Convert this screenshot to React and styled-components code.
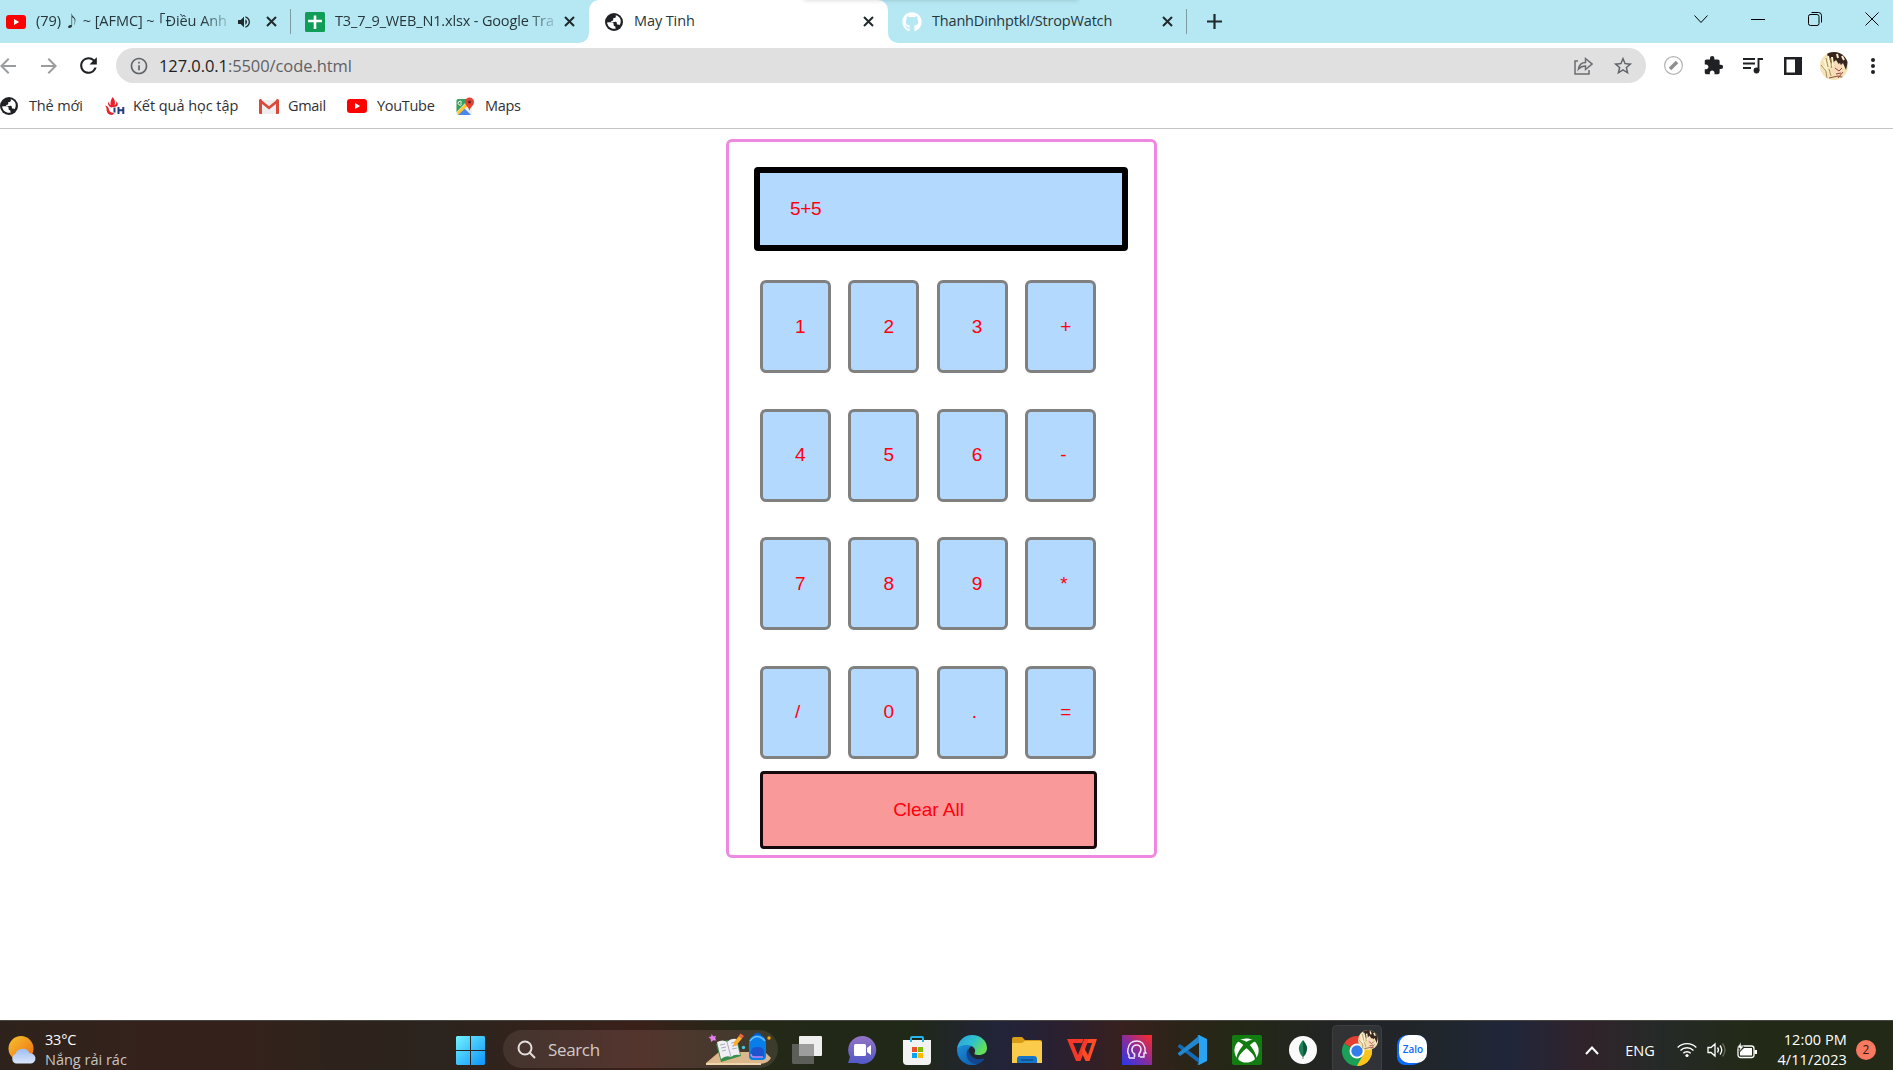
import React from "react";
import styled, { createGlobalStyle } from "styled-components";
import { MdExtension, MdStarBorder, MdRefresh, MdArrowBack, MdArrowForward, MdInfoOutline, MdVolumeUp } from "react-icons/md";
import { FaGithub, FaXbox } from "react-icons/fa";

const strip = "#b5e8f3";

const Global = createGlobalStyle`
  * { box-sizing: border-box; }
  html, body { margin: 0; height: 100%; overflow: hidden; background: #fff; }
  svg { display: block; flex: none; }
`;

const Screen = styled.div`
  width: 1893px;
  height: 1070px;
  display: flex;
  flex-direction: column;
  font-family: "Open Sans", "Noto Sans", "Noto Sans CJK JP", sans-serif;
  background: #fff;
`;

const Cell = styled.div`
  flex: none;
  width: ${(p) => p.$w}px;
  margin-left: ${(p) => p.$ml || 0}px;
  display: flex;
  align-items: center;
  justify-content: center;
`;

/* ---------- tab strip ---------- */
const TabStrip = styled.header`
  height: 43px;
  flex: none;
  display: flex;
  position: relative;
`;
const StripLeft = styled.div`
  width: 589px;
  background: ${strip};
  border-bottom-right-radius: 10px;
  display: flex;
  align-items: center;
`;
const ActiveSlot = styled.div`
  width: 299px;
  background: linear-gradient(${strip} 50%, #fff 50%);
`;
const ActiveTab = styled.div`
  height: 43px;
  background: #fff;
  border-radius: 10px 10px 0 0;
  display: flex;
  align-items: center;
`;
const StripRight = styled.div`
  flex: 1;
  background: ${strip};
  border-bottom-left-radius: 10px;
  display: flex;
  align-items: center;
`;
const TopShade = styled.div`
  position: absolute;
  left: 804px;
  top: -6px;
  width: 274px;
  height: 6px;
  box-shadow: 0 0 5px rgba(0, 0, 0, 0.18);
`;
const Title = styled.div`
  flex: none;
  width: ${(p) => p.$w}px;
  margin-left: ${(p) => p.$ml || 0}px;
  white-space: nowrap;
  font-size: 14.5px;
  line-height: 24px;
  letter-spacing: ${(p) => p.$ls || 0}px;
  color: #27363b;
  padding-bottom: 2px;
  mask-image: ${(p) => (p.$fade ? "linear-gradient(90deg, #000 calc(100% - 26px), rgba(0, 0, 0, 0.2))" : "none")};
`;
const Divider = styled.div`
  width: 1px;
  height: 25px;
  margin-left: ${(p) => p.$ml}px;
  background: #7f9ba2;
`;
const WindowKey = styled(Cell)`
  height: 43px;
  padding-bottom: 6px;
`;

/* ---------- toolbar ---------- */
const Toolbar = styled.div`
  height: 45px;
  flex: none;
  display: flex;
  align-items: center;
`;
const Omnibox = styled.div`
  width: 1530px;
  height: 35px;
  margin-left: 19px;
  border-radius: 18px;
  background: #e0e0e0;
  display: flex;
  align-items: center;
`;
const Url = styled.div`
  flex: 1;
  margin-left: 11px;
  font-size: 16.5px;
  line-height: 24px;
  letter-spacing: -0.08px;
  color: #5f6164;
  span { color: #1f2023; }
`;
const Bookmarks = styled.nav`
  height: 41px;
  flex: none;
  display: flex;
  align-items: center;
  padding-bottom: 4px;
  border-bottom: 1px solid #c4c4c4;
`;
const BookmarkText = styled(Title)`
  color: #303134;
  padding-bottom: 0;
`;

/* ---------- calculator ---------- */
const Page = styled.main`
  height: 891px;
  flex: none;
  display: flex;
  padding: 10px 0 0 726px;
  align-items: flex-start;
  font-family: "Liberation Sans", Arial, sans-serif;
  font-size: 19px;
  line-height: 22px;
  color: #ff000c;
`;
const Calculator = styled.section`
  width: 431px;
  height: 719px;
  border: 3px solid #ee88e0;
  border-radius: 6px;
  padding: 25px 0 0 25px;
`;
const Display = styled.div`
  width: 374px;
  height: 84px;
  border: 6px solid #000;
  border-radius: 4px;
  background: #b3d9ff;
  padding: 25px 0 0 30px;
  letter-spacing: -0.3px;
`;
const Pad = styled.div`
  margin: 29px 0 0 6px;
  display: grid;
  grid-template-columns: repeat(4, 71px);
  grid-auto-rows: 93px;
  column-gap: 17.4px;
  row-gap: 35.67px;
`;
const Key = styled.button`
  font: inherit;
  color: inherit;
  border: 3px solid #808080;
  border-radius: 6px;
  background: #b3d9ff;
  padding: 0 0 0 32px;
  text-align: left;
`;
const ClearKey = styled.button`
  display: block;
  font: inherit;
  color: inherit;
  width: 337px;
  height: 78px;
  margin: 12px 0 0 6px;
  border: 3px solid #170a0c;
  border-radius: 4px;
  background: #fa9999;
  padding: 0;
`;

/* ---------- taskbar ---------- */
const Taskbar = styled.footer`
  height: 50px;
  flex: none;
  display: flex;
  border-top: 1px solid #474640;
  background: linear-gradient(90deg, #2e231c 0, #35211c 160px, #35211c 240px, #2e231c 330px, #2c241e 440px, #3a2019 640px, #242817 740px, #202817 910px, #22243a 1000px, #2a2030 1060px, #38201f 1120px, #2c2418 1180px, #232816 1240px, #222425 1340px, #20262c 1440px, #20263a 1510px, #31232b 1585px, #252a28 1660px, #222a17 1750px, #222a17 100%);
`;
const Weather = styled.div`
  display: flex;
  width: 456px;
  padding-left: 8px;
`;
const WeatherPicture = styled.div`
  padding-top: 14px;
`;
const WeatherText = styled.div`
  margin-left: 8px;
  padding-top: 9px;
  font-size: 14.5px;
  line-height: 20px;
  letter-spacing: -0.2px;
  white-space: nowrap;
  color: #fff;
  small { display: block; font-size: 14.5px; letter-spacing: 0; color: #c9c4c1; }
`;
const SearchBox = styled.div`
  width: 275px;
  height: 38px;
  margin: 9px 0 0 18px;
  border-radius: 19px;
  overflow: hidden;
  background: linear-gradient(90deg, #44342e, #54352e 50%, #3c3c2c);
  display: flex;
  align-items: center;
  color: #d2cac7;
  font-size: 17px;
`;
const SearchText = styled.span`
  margin-left: 12px;
  width: 158px;
  padding-top: 1px;
  letter-spacing: -0.35px;
`;
const AppCell = styled.div`
  flex: none;
  width: ${(p) => p.$w || 55}px;
  height: 45px;
  margin-top: 4px;
  display: flex;
  justify-content: center;
  padding-top: ${(p) => p.$top || 10}px;
`;
const RunningApp = styled(AppCell)`
  background: rgba(255, 255, 255, 0.07);
  border: 1px solid rgba(255, 255, 255, 0.06);
  border-bottom: 0;
  border-radius: 5px 5px 0 0;
  padding-top: 3px;
  padding-left: 3px;
`;
const XboxTile = styled.div`
  width: 30px;
  height: 30px;
  border-radius: 2px;
  background: #117d10;
  display: flex;
  align-items: center;
  justify-content: center;
`;
const ZaloTile = styled.div`
  width: 30px;
  height: 30px;
  border-radius: 10px 10px 16px 8px;
  background: #0b6bff;
  padding-left: 2px;
`;
const ZaloBubble = styled.div`
  width: 28px;
  height: 28px;
  border-radius: 10px;
  background: #fff;
  color: #0b68ff;
  font: 600 10px/28px "Open Sans", sans-serif;
  text-align: center;
`;
const Tray = styled.div`
  display: flex;
  align-items: center;
  margin-left: auto;
  padding: 9px 17px 0 0;
  color: #fff;
  font-size: 14.5px;
`;
const Clock = styled.div`
  width: 80px;
  margin-left: 10px;
  font-size: 14.5px;
  line-height: 20px;
  letter-spacing: 0.1px;
  text-align: right;
  white-space: nowrap;
`;
const Badge = styled.div`
  width: 20px;
  height: 20px;
  margin-left: 9px;
  border-radius: 50%;
  background: #f8795f;
  color: #30150f;
  font-size: 12px;
  line-height: 19px;
  text-align: center;
`;

/* ---------- drawings ---------- */
const YouTubeIcon = () => (
  <svg width="20" height="14" viewBox="0 0 20 14"><rect width="20" height="14" rx="3" fill="#f00" /><path d="M8 4l5.2 3L8 10z" fill="#fff" /></svg>
);
const SheetIcon = () => (
  <svg width="20" height="20" viewBox="0 0 20 20"><rect width="20" height="20" rx="1.5" fill="#109d58" /><path d="M8.7 3.4h2.6v4.3h5.6v2.6h-5.6v6.6H8.7v-6.6H3.1V7.7h5.6z" fill="#fff" /></svg>
);
const GlobeIcon = () => (
  <svg width="18" height="18" viewBox="0 0 18 18"><circle cx="9" cy="9" r="9" fill="#202124" /><path d="M2 8.5h4.300l2 1.700v2.400l1.400 1v2.200C5.200 16 2.100 12.800 2 8.500zM11.600 2.500v1.300q0 1.400-1.500 1.400H8.600v1.500q0 .8-.9.8H6.300V9h4.400q.9 0 .9.900v2h.8q1.200 0 1.600 1.100c3.400-4 2-8.800-2.400-10.500z" fill="#fff" transform="rotate(-8 9 9)" /></svg>
);
const SchoolIcon = () => (
  <svg width="20" height="18" viewBox="0 0 20 18">
    <path d="M7.600 0c2.400 3 3 5 2 8.300 1.700-1 2-2.600 1.700-4.200C13.500 6.500 13 8.500 11.500 9.500L6 10.500C3 9 2.500 7 3.400 4.300c.2 1.900 1 3 2.300 3.800C5 5 6 3 7.600 0z" fill="#e8212c" />
    <path d="M0 8.500c2.500.4 3.500 1.800 4 4.200.6 2.300 2.800 3.200 5.400 3.200L7.300 18C3 17.800 1.700 15.500 1.600 12.500 1.500 10.700 1 9.500 0 8.500z" fill="#e8212c" />
    <path d="M8.500 10.500h2v5h-2zM12.500 10h2v2.300h2.800V10h2v7h-2v-2.700h-2.800V17h-2z" fill="#263a80" />
  </svg>
);
const GmailIcon = () => (
  <svg width="20" height="15" viewBox="0 0 20 15"><path d="M2 1h16v14H2z" fill="#eee" /><path d="M1.500 .3L10 7.200 18.500.3v3.500L10 10.600 1.500 3.800z" fill="#d9483b" /><path d="M0 1.500C0 .5.800 0 1.600 0L3 .8V15H1a1 1 0 01-1-1zM20 1.500c0-1-.8-1.500-1.600-1.500L17 .8V15H19a1 1 0 001-1z" fill="#d9483b" /></svg>
);
const MapsIcon = () => (
  <svg width="20" height="19" viewBox="0 0 20 19">
    <rect x="1" y="2" width="16" height="16" rx="2" fill="#eceff1" /><path d="M3 2h11L1.500 15V4A2 2 0 013 2z" fill="#34a25b" /><path d="M9 11l7 7H2.500z" fill="#4a86ec" /><path d="M13 4L2 15l1 3L15 7z" fill="#fbc734" />
    <path d="M14.500 14c-.3-4-4.500-5-4.500-9a4.500 4.500 0 019 0c0 4-4.200 5-4.500 9z" fill="#e34334" /><circle cx="14.500" cy="5" r="1.600" fill="#792119" />
    <path d="M6.600 4.800a2 2 0 100 2.700M5.200 6h1.600" stroke="#fff" fill="none" />
  </svg>
);
const Line = ({ w = 14, h = 14, d, sw = 1, color = "#000" }) => (
  <svg width={w} height={h} viewBox={`0 0 ${w} ${h}`} fill="none" stroke={color} strokeWidth={sw}><path d={d} /></svg>
);
const PortraitArt = () => (
  <>
    <defs><clipPath id="face"><circle cx="14" cy="14" r="14" /></clipPath></defs>
    <g clipPath="url(#face)">
      <rect width="28" height="28" fill="#f2e3b8" />
      <path d="M7 0h15l6 9-2 9-3-7-3 3-4-6-4 4-4-5z" fill="#39251f" />
      <path d="M14 9l3 4 3-2 3 7-2 6-6 1-3-6z" fill="#f8d9b8" />
      <path d="M4 7l3 9M8 4l2 10M12 5l1 9M3 14l5 6M17 2l1 4M22 4l2 4" stroke="#fff3cf" strokeWidth="2" />
      <path d="M1 13l5 6 1 8M6 6l2 9M10.500 6l1 10M9 17l2 7" stroke="#a58250" strokeWidth=".9" fill="none" />
      <path d="M15 16l4 3 3-3M16 22l5-1M9 26l9-2 7 2M18 26l5-6" stroke="#8d4a3b" fill="none" />
    </g>
  </>
);
const PortraitIcon = () => (
  <svg width="28" height="28" viewBox="0 0 28 28"><PortraitArt /></svg>
);
const WeatherIcon = () => (
  <svg width="29" height="29" viewBox="0 0 29 29">
    <defs><linearGradient id="sun" x1="0" y1="0" x2="1" y2="1"><stop stopColor="#f6c32f" /><stop offset="1" stopColor="#ee6b10" /></linearGradient><linearGradient id="cloud" x1="0" y1="0" x2="0" y2="1"><stop stopColor="#9ebdf3" /><stop offset="1" stopColor="#dbe6fa" /></linearGradient></defs>
    <circle cx="13" cy="13.500" r="12.500" fill="url(#sun)" />
    <path d="M8 28.500a5 5 0 01-.5-9.500 7.500 7.500 0 0114-.8A5.200 5.200 0 0123 28.500z" fill="url(#cloud)" />
  </svg>
);
const StartIcon = () => (
  <svg width="29" height="29" viewBox="0 0 29 29"><defs><linearGradient id="win" gradientUnits="userSpaceOnUse" x1="0" y1="0" x2="29" y2="29"><stop stopColor="#72f2ff" /><stop offset="1" stopColor="#0c93fa" /></linearGradient></defs><path d="M1 0h13v14H0V1zM15 0h13l1 1v13H15zM0 15h14v14H1l-1-1zM15 15h14v13l-1 1H15z" fill="url(#win)" /></svg>
);
const StudyArt = () => (
  <svg width="66" height="34" viewBox="0 0 66 34">
    <path d="M0 31L13 20h46l6 6q-3 6-13 6H0z" fill="#dbb78c" />
    <path d="M0 31h55v2H0z" fill="#f1d5ad" />
    <path d="M5.500 2l2 2.500 2.500-.8-.8 2.800 1.300 2-3-.3L5 10l-.3-3L2.500 5l2.700-.5z" fill="#e77cf0" />
    <path d="M10 12l11-4 2 1 8-2 4 17-20 6z" fill="#388e4c" /><path d="M11 10q6-3 10 0 4-4 9-3l4 16q-6-1-9 2-5-2-10 2z" fill="#f0eff5" /><path d="M21 10l4 15M14 13l5-1M15 16l5-1M16 19l4-1M25 11l5-1M26 14l5-1M26 17l5-1" stroke="#9b9baa" strokeWidth=".8" />
    <path d="M27 15l1-5 5-6 3 2.500-5 6z" fill="#f9ae2d" /><path d="M32.500 4l2-2.500 3.500 2.500-2 2.500z" fill="#f16442" />
    <circle cx="37.500" cy="15.500" r="1.700" fill="#43c8dd" /><circle cx="63" cy="6" r="1.700" fill="#f6a91d" />
    <path d="M48 2q4-3 7 0v3h-7z" fill="#0759bd" /><path d="M43 11C43 0 60 0 60 11v13q0 4-4 4h-9q-4 0-4-4z" fill="#087ee9" /><path d="M44 9q7-9 15 0" stroke="#6bc0ff" fill="none" strokeWidth="1.500" /><path d="M45 20q0-5 6.500-5t6.500 5v5H45z" fill="#1d54ce" /><path d="M45 22q0 3 3 3h9" stroke="#c485ee" strokeWidth="1.500" fill="none" />
  </svg>
);
const TaskViewIcon = () => (
  <svg width="31" height="30" viewBox="0 0 31 30"><rect x="8" y="1" width="23" height="20" rx="1" fill="#eee" /><path d="M1 9h7v12h15v8H2l-1-1z" fill="#5c5e59" /><path d="M8 9h15v12H8z" fill="#9d9d9d" /></svg>
);
const ChatIcon = () => (
  <svg width="30" height="30" viewBox="0 0 30 30"><defs><linearGradient id="chat" x1="0" y1="0" x2="0" y2="1"><stop stopColor="#9474c5" /><stop offset="1" stopColor="#5158c8" /></linearGradient></defs><path d="M15 1a14 14 0 11-5 27H1l2-6A14 14 0 0115 1z" fill="url(#chat)" /><rect x="7" y="9" width="12" height="12" rx="1.500" fill="#fff" /><path d="M20 13l4-3v10l-4-3z" fill="#fff" /></svg>
);
const StoreIcon = () => (
  <svg width="30" height="30" viewBox="0 0 30 30"><path d="M9 7V3q0-1 1-1h10q1 0 1 1v4" stroke="#25b4eb" strokeWidth="2" fill="none" /><path d="M1 5h28v21q0 4-4 4H5q-4 0-4-4z" fill="#f2f2f2" /><path d="M9 5v2M21 5v2" stroke="#25b4eb" strokeWidth="2" /><path d="M10 12h5v5h-5z" fill="#f04f25" /><path d="M16 12h5v5h-5z" fill="#7eba02" /><path d="M10 18h5v5h-5z" fill="#05a4ee" /><path d="M16 18h5v5h-5z" fill="#fdb902" /></svg>
);
const EdgeIcon = () => (
  <svg width="30" height="30" viewBox="0 0 30 30"><defs><linearGradient id="edgeTop" x1="0" y1="0" x2="1" y2=".5"><stop stopColor="#2b9ee0" /><stop offset=".55" stopColor="#2ec1cf" /><stop offset="1" stopColor="#65df55" /></linearGradient><linearGradient id="edgeLow" x1="0" y1="0" x2="1" y2="1"><stop stopColor="#1d91da" /><stop offset="1" stopColor="#0b53a5" /></linearGradient></defs>
    <path d="M0 15a15 15 0 0027.500 8.500C18 27 11 23 11 17c0-3 1.500-5 4-6C8 6 0 10 0 15z" fill="url(#edgeLow)" /><path d="M0 14C1 6 7 0 15 0c9 0 15 6 15 13 0 5-4 7-8 7-5 0-5-1-4-3 1-3-2-7-8-7-5 0-9 2-10 4z" fill="url(#edgeTop)" /><path d="M11 14c-4 7 1 15 9 15 3-1 6-3 7.500-5.500C20 26 13 23 11 14z" fill="#12468f" />
  </svg>
);
const FolderIcon = () => (
  <svg width="30" height="30" viewBox="0 0 30 30"><path d="M0 4q0-2 2-2h8l3 3h15q2 0 2 2v8H0z" fill="#d99c18" /><path d="M0 8h10l3-2h15q2 0 2 2v20H0z" fill="#fbcc4b" /><path d="M5 28v-4q0-3 3-3h14q3 0 3 3v4z" fill="#1676c6" /><path d="M9 25h12" stroke="#0c4d91" strokeWidth="1.500" /></svg>
);
const WpsIcon = () => (
  <svg width="30" height="30" viewBox="0 0 30 30"><path d="M0 4h16.500l-1.500 4H6l5 12L17 4h5l-8.500 22H9z" fill="#f53827" /><path d="M16.500 12l4.500 8 4-12h-5l1.500-4H30l-7.500 22h-4l-4-9z" fill="#ff4c27" /></svg>
);
const HeadIcon = () => (
  <svg width="30" height="30" viewBox="0 0 30 30"><defs><linearGradient id="head" x1="0" y1="1" x2="1" y2="0"><stop stopColor="#2538ee" /><stop offset=".5" stopColor="#8c2c9a" /><stop offset="1" stopColor="#ff2a24" /></linearGradient></defs><rect width="30" height="30" fill="url(#head)" /><path d="M7 23v-3q-2-2-1-6 1-8 9-8 6 0 8 7v3l1 2h-2v4h-4" fill="none" stroke="#efe6fb" strokeWidth="1.400" /><path d="M12.500 22v-3q-3-2-2.500-5 1-4 4.700-4t4.300 4q0 3-2 5v3M7 23h6" fill="none" stroke="#efe6fb" strokeWidth="1.600" /></svg>
);
const CodeIcon = () => (
  <svg width="30" height="30" viewBox="0 0 30 30"><path d="M1 11l2-2 20 15v5L1 12z" fill="#126bb4" /><path d="M1 19l2 2L23 7V0L1 18z" fill="#2187d0" /><path d="M22 0l8 4v22l-8 4-2-1q2 0 2-2V3q0-2-2-2z" fill="#29a3f2" /></svg>
);
const MongoIcon = () => (
  <svg width="30" height="30" viewBox="0 0 30 30"><circle cx="15" cy="15" r="14" fill="#fafafa" /><path d="M15 5q-5 6-4 10 1 5 4 7z" fill="#188559" /><path d="M15 5q5 6 4 10-1 5-4 7z" fill="#0a573d" /><path d="M15 12v12" stroke="#446b5a" strokeWidth=".7" /></svg>
);
const ChromeIcon = () => (
  <svg width="38" height="38" viewBox="0 0 38 38">
    <path d="M17 22L4 14.500A15 15 0 0130 14.500z" fill="#e53f32" /><path d="M17 22L4 14.500A15 15 0 0017 37z" fill="#1ba157" /><path d="M17 22l13-7.500A15 15 0 0117 37z" fill="#fcc51d" /><path d="M10.500 25.500L17 37l6.500-11.500z" fill="#1ba157" /><path d="M17 15h13.300A15 15 0 0117 37l6.500-11z" fill="#fcc51d" />
    <circle cx="17" cy="22" r="7.500" fill="#fff" /><circle cx="17" cy="22" r="5.700" fill="#337eea" />
    <g transform="translate(18 1) scale(.72)"><PortraitArt /></g>
  </svg>
);
const WifiIcon = () => (
  <svg width="20" height="16" viewBox="0 0 20 16" fill="none" stroke="#fff" strokeWidth="1.400"><path d="M.7 5.500a13 13 0 0118.600 0M3.500 8.500a9.200 9.200 0 0113 0M6.300 11.300a5.200 5.200 0 017.400 0" /><circle cx="10" cy="13.500" r="1.600" fill="#fff" stroke="none" /></svg>
);
const SoundIcon = () => (
  <svg width="20" height="16" viewBox="0 0 20 16" fill="none" stroke="#fff" strokeWidth="1.300"><path d="M1 5.500h3L8 2v12l-4-3.500H1zM10.500 5.500q2 2.500 0 5M13 3.500q3.500 4.500 0 9" /><path d="M15.500 1.500q5 6.500 0 13" stroke="#666b5c" /></svg>
);
const BatteryIcon = () => (
  <svg width="20" height="17" viewBox="0 0 20 17"><rect x="1" y="4" width="16" height="11.500" rx="2.500" fill="none" stroke="#fff" strokeWidth="1.300" /><path d="M3 13.500V10l4-4h8v7.500zM17.500 8H20v4h-2.500z" fill="#fff" /><path d="M4 0L0 6h3l-1 4 5-6H4z" fill="#fff" stroke="#222a17" strokeWidth=".5" /></svg>
);
const CloseMark = () => <Line w={11} h={11} d="M1 1l9 9M10 1l-9 9" sw={2} color="#20292c" />;

const keys = ["1", "2", "3", "+", "4", "5", "6", "-", "7", "8", "9", "*", "/", "0", ".", "="];

export default function App() {
  return (
    <Screen>
      <Global />
      <TabStrip>
        <StripLeft>
          <Cell $w={20} $ml={6}><YouTubeIcon /></Cell>
          <Title $w={192} $ml={10} $ls={-0.06} $fade>(79) ♪ ~ [AFMC] ~ ｢Điều Anh</Title>
          <Cell $w={14} $ml={9}><MdVolumeUp size={16} color="#20292c" /></Cell>
          <Cell $w={11} $ml={15}><CloseMark /></Cell>
          <Divider $ml={13} />
          <Cell $w={20} $ml={14}><SheetIcon /></Cell>
          <Title $w={219} $ml={10} $ls={-0.15} $fade>T3_7_9_WEB_N1.xlsx - Google Tra</Title>
          <Cell $w={11} $ml={10}><CloseMark /></Cell>
        </StripLeft>
        <ActiveSlot>
          <ActiveTab>
            <Cell $w={18} $ml={16}><GlobeIcon /></Cell>
            <Title $w={219} $ml={11} $ls={-0.1}>May Tinh</Title>
            <Cell $w={11} $ml={10}><CloseMark /></Cell>
          </ActiveTab>
        </ActiveSlot>
        <StripRight>
          <Cell $w={20} $ml={14}><FaGithub size={20} color="#fff" /></Cell>
          <Title $w={220} $ml={10} $ls={-0.18}>ThanhDinhptkl/StropWatch</Title>
          <Cell $w={11} $ml={10}><CloseMark /></Cell>
          <Divider $ml={13} />
          <Cell $w={15} $ml={20}><Line w={15} h={15} d="M7.500 0v15M0 7.500h15" sw={2.2} color="#20292c" /></Cell>
          <WindowKey $w={14} $ml={472}><Line d="M.5 3.500l6.500 7 6.500-7" /></WindowKey>
          <WindowKey $w={14} $ml={43}><Line d="M0 7.500h14" /></WindowKey>
          <WindowKey $w={14} $ml={43}><Line d="M2 2.500h7q2 0 2 2v7q0 2-2 2H2.500q-2 0-2-2v-7q0-2 2-2M3.500 .5h7q3 0 3 3v7" /></WindowKey>
          <WindowKey $w={14} $ml={43}><Line d="M.5 .5l13 13M13.500 .5l-13 13" /></WindowKey>
        </StripRight>
        <TopShade />
      </TabStrip>

      <Toolbar>
        <Cell $w={15}><MdArrowBack size={24} color="#9b9c9d" /></Cell>
        <Cell $w={17} $ml={25}><MdArrowForward size={24} color="#9b9c9d" /></Cell>
        <Cell $w={17} $ml={23}><MdRefresh size={25} color="#202124" /></Cell>
        <Omnibox>
          <Cell $w={18} $ml={14}><MdInfoOutline size={20} color="#5f6368" /></Cell>
          <Url><span>127.0.0.1</span>:5500/code.html</Url>
          <Cell $w={19}><Line w={19} h={19} sw={1.5} color="#6a6c6f" d="M4 5H1v13h14v-4M4.500 13c.8-4.500 3.500-6.500 7-6.500V2.500L18 8l-6.500 5.500V10c-3 0-5 .8-7 3z" /></Cell>
          <Cell $w={18} $ml={21}><MdStarBorder size={22} color="#5f6368" /></Cell>
          <Cell $w={14} />
        </Omnibox>
        <Cell $w={19} $ml={18}>
          <svg width="19" height="19" viewBox="0 0 19 19"><circle cx="9.500" cy="9.500" r="8.900" fill="#fff" stroke="#b4b4b4" strokeWidth="1.200" /><path d="M6 13l7-7" stroke="#8f8f8f" strokeWidth="3.500" /></svg>
        </Cell>
        <Cell $w={18} $ml={21}><MdExtension size={21} color="#202124" /></Cell>
        <Cell $w={20} $ml={21}>
          <svg width="20" height="17" viewBox="0 0 20 17" fill="none" stroke="#202124" strokeWidth="1.900"><path d="M0 2h12M0 6.500h12M0 11h8M15.500 14V2H20" /><circle cx="13.500" cy="13.500" r="2.900" fill="#202124" stroke="none" /></svg>
        </Cell>
        <Cell $w={18} $ml={21}>
          <svg width="18" height="18" viewBox="0 0 18 18"><path d="M0 0h18v18H0z" fill="#202124" /><path d="M2.500 2.500H11v13H2.500z" fill="#fff" /></svg>
        </Cell>
        <Cell $w={28} $ml={18}><PortraitIcon /></Cell>
        <Cell $w={4} $ml={23}>
          <svg width="4" height="16" viewBox="0 0 4 16" fill="#202124"><circle cx="2" cy="2" r="2" /><circle cx="2" cy="8" r="2" /><circle cx="2" cy="14" r="2" /></svg>
        </Cell>
      </Toolbar>

      <Bookmarks>
        <Cell $w={18}><GlobeIcon /></Cell>
        <BookmarkText $w={54} $ml={11} $ls={-0.15}>Thẻ mới</BookmarkText>
        <Cell $w={20} $ml={22}><SchoolIcon /></Cell>
        <BookmarkText $w={106} $ml={8} $ls={-0.05}>Kết quả học tập</BookmarkText>
        <Cell $w={20} $ml={20}><GmailIcon /></Cell>
        <BookmarkText $w={38} $ml={9} $ls={-0.3}>Gmail</BookmarkText>
        <Cell $w={20} $ml={21}><YouTubeIcon /></Cell>
        <BookmarkText $w={57} $ml={10} $ls={-0.3}>YouTube</BookmarkText>
        <Cell $w={20} $ml={21}><MapsIcon /></Cell>
        <BookmarkText $w={38} $ml={10} $ls={-0.3}>Maps</BookmarkText>
      </Bookmarks>

      <Page>
        <Calculator>
          <Display>5+5</Display>
          <Pad>{keys.map((k) => <Key key={k}>{k}</Key>)}</Pad>
          <ClearKey>Clear All</ClearKey>
        </Calculator>
      </Page>

      <Taskbar>
        <Weather>
          <WeatherPicture><WeatherIcon /></WeatherPicture>
          <WeatherText>33°C<small>Nắng rải rác</small></WeatherText>
        </Weather>
        <AppCell $w={29} $top={11}><StartIcon /></AppCell>
        <SearchBox>
          <Cell $w={19} $ml={14}><Line w={19} h={19} sw={2} color="#e4dedc" d="M1.500 8a6.500 6.500 0 1013 0a6.500 6.500 0 10-13 0M12.800 12.800L18 18" /></Cell>
          <SearchText>Search</SearchText>
          <StudyArt />
        </SearchBox>
        <AppCell $w={56}><TaskViewIcon /></AppCell>
        <AppCell><ChatIcon /></AppCell>
        <AppCell><StoreIcon /></AppCell>
        <AppCell><EdgeIcon /></AppCell>
        <AppCell><FolderIcon /></AppCell>
        <AppCell><WpsIcon /></AppCell>
        <AppCell><HeadIcon /></AppCell>
        <AppCell><CodeIcon /></AppCell>
        <AppCell><XboxTile><FaXbox size={25} color="#fff" /></XboxTile></AppCell>
        <AppCell $w={58}><MongoIcon /></AppCell>
        <RunningApp $w={50}><ChromeIcon /></RunningApp>
        <AppCell $w={60}><ZaloTile><ZaloBubble>Zalo</ZaloBubble></ZaloTile></AppCell>
        <Tray>
          <Cell $w={14}><Line w={14} h={9} d="M1 8l6-6.500L13 8" sw={2} color="#fff" /></Cell>
          <Cell $w={28} $ml={27}>ENG</Cell>
          <Cell $w={20} $ml={23}><WifiIcon /></Cell>
          <Cell $w={20} $ml={10}><SoundIcon /></Cell>
          <Cell $w={20} $ml={10}><BatteryIcon /></Cell>
          <Clock>12:00 PM<br />4/11/2023</Clock>
          <Badge>2</Badge>
        </Tray>
      </Taskbar>
    </Screen>
  );
}
